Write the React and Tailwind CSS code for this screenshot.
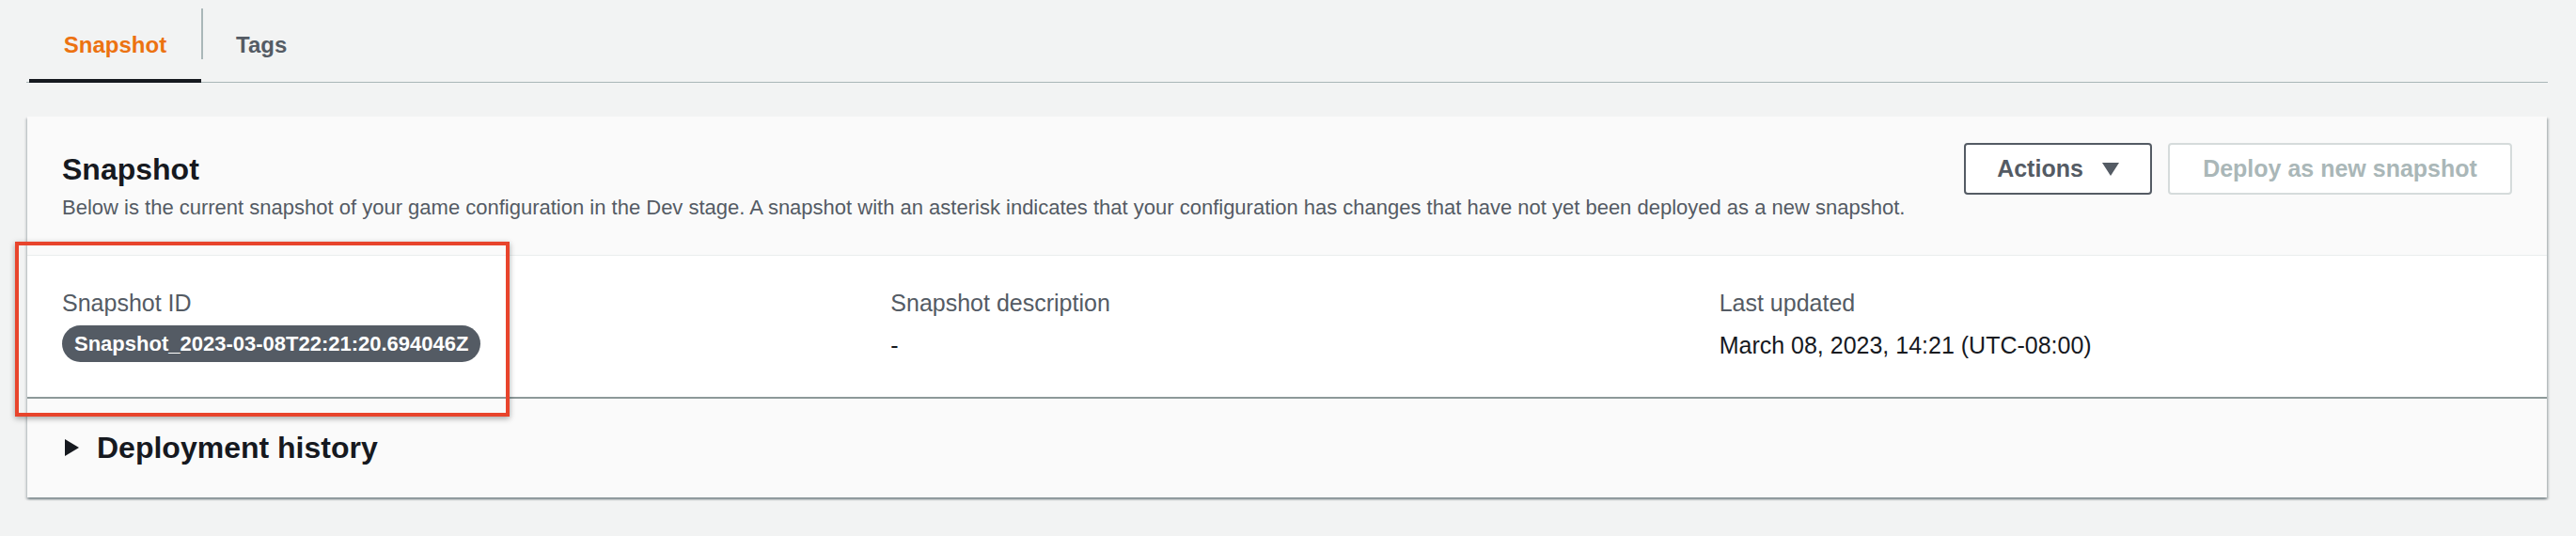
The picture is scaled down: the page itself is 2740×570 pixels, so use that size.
export default function App() {
  return (
    <div className="relative min-h-[570px] w-[2740px] bg-[#f2f3f3] font-['Liberation_Sans',Arial,sans-serif] text-[#16191f]">
      {/* tabs */}
      <div className="ml-[28px] mr-[30px] flex h-[88px] border-b border-[#aab7b8]">
        <button className="relative h-full w-[186px] pl-[3px] pt-[9px]">
          <div className="flex h-[54px] items-center justify-center text-[24px] font-bold text-[#ec7211]">Snapshot</div>
          <span className="absolute bottom-[-1px] left-[3px] right-0 h-[4px] bg-[#16191f]" />
        </button>
        <div className="mt-[9px] h-[54px] w-[2px] bg-[#aab7b8]" />
        <button className="h-full pl-[35px] pt-[9px]">
          <div className="flex h-[54px] items-center text-[24px] font-bold text-[#545b64]">Tags</div>
        </button>
      </div>

      {/* container */}
      <div className="ml-[29px] mt-[36px] w-[2680px] bg-[#fafafa] shadow-[0_2px_2px_0_rgba(0,28,36,0.3),2px_2px_2px_0_rgba(0,28,36,0.18),-2px_2px_2px_0_rgba(0,28,36,0.12)]">
        <div className="flex h-[148px] items-start justify-between border-b border-[#eaeded] px-[37px] pt-[28px]">
          <div className="mt-[8px]">
            <h2 className="text-[32px] font-bold leading-[40px]">Snapshot</h2>
            <p className="mt-[4px] text-[22px] leading-[33px] text-[#545b64]">
              Below is the current snapshot of your game configuration in the Dev stage. A snapshot with an asterisk indicates that your configuration has changes that have not yet been deployed as a new snapshot.
            </p>
          </div>
          <div className="flex gap-[17px]">
            <button className="flex h-[55px] w-[200px] items-center justify-center gap-[20px] rounded-[4px] border-2 border-[#545b64] bg-white text-[25px] font-bold text-[#545b64]">
              Actions
              <svg width="18" height="14" viewBox="0 0 18 14">
                <polygon points="0,0 18,0 9,14" fill="#545b64" />
              </svg>
            </button>
            <button className="flex h-[55px] w-[366px] items-center justify-center rounded-[4px] border-2 border-[#d5dbdb] bg-white text-[25px] font-bold text-[#aab7b8]">
              Deploy as new snapshot
            </button>
          </div>
        </div>

        <div className="grid grid-cols-3 gap-x-[38px] border-b-2 border-[#8d9999] bg-white px-[37px] pb-[36px] pt-[32px]">
          <div>
            <div className="text-[25px] leading-[37px] text-[#545b64]">Snapshot ID</div>
            <span className="mt-[5px] inline-flex h-[39px] items-center rounded-full bg-[#545b64] px-[13px] text-[22px] font-bold text-white">
              Snapshot_2023-03-08T22:21:20.694046Z
            </span>
          </div>
          <div>
            <div className="text-[25px] leading-[37px] text-[#545b64]">Snapshot description</div>
            <div className="mt-[8px] text-[25px] leading-[37px]">-</div>
          </div>
          <div>
            <div className="text-[25px] leading-[37px] text-[#545b64]">Last updated</div>
            <div className="mt-[8px] text-[25px] leading-[37px]">March 08, 2023, 14:21 (UTC-08:00)</div>
          </div>
        </div>

        <div className="flex items-center gap-[19px] pb-[33px] pl-[40px] pt-[32px]">
          <svg width="15" height="18" viewBox="0 0 15 18">
            <polygon points="0,0 15,9 0,18" fill="#16191f" />
          </svg>
          <span className="text-[32px] font-bold leading-[40px]">Deployment history</span>
        </div>
      </div>

      {/* annotation */}
      <div className="absolute left-[16px] top-[257px] h-[186px] w-[526px] border-4 border-[#e8442c] shadow-[0_2px_6px_rgba(0,0,0,0.35)]" />
    </div>
  );
}
